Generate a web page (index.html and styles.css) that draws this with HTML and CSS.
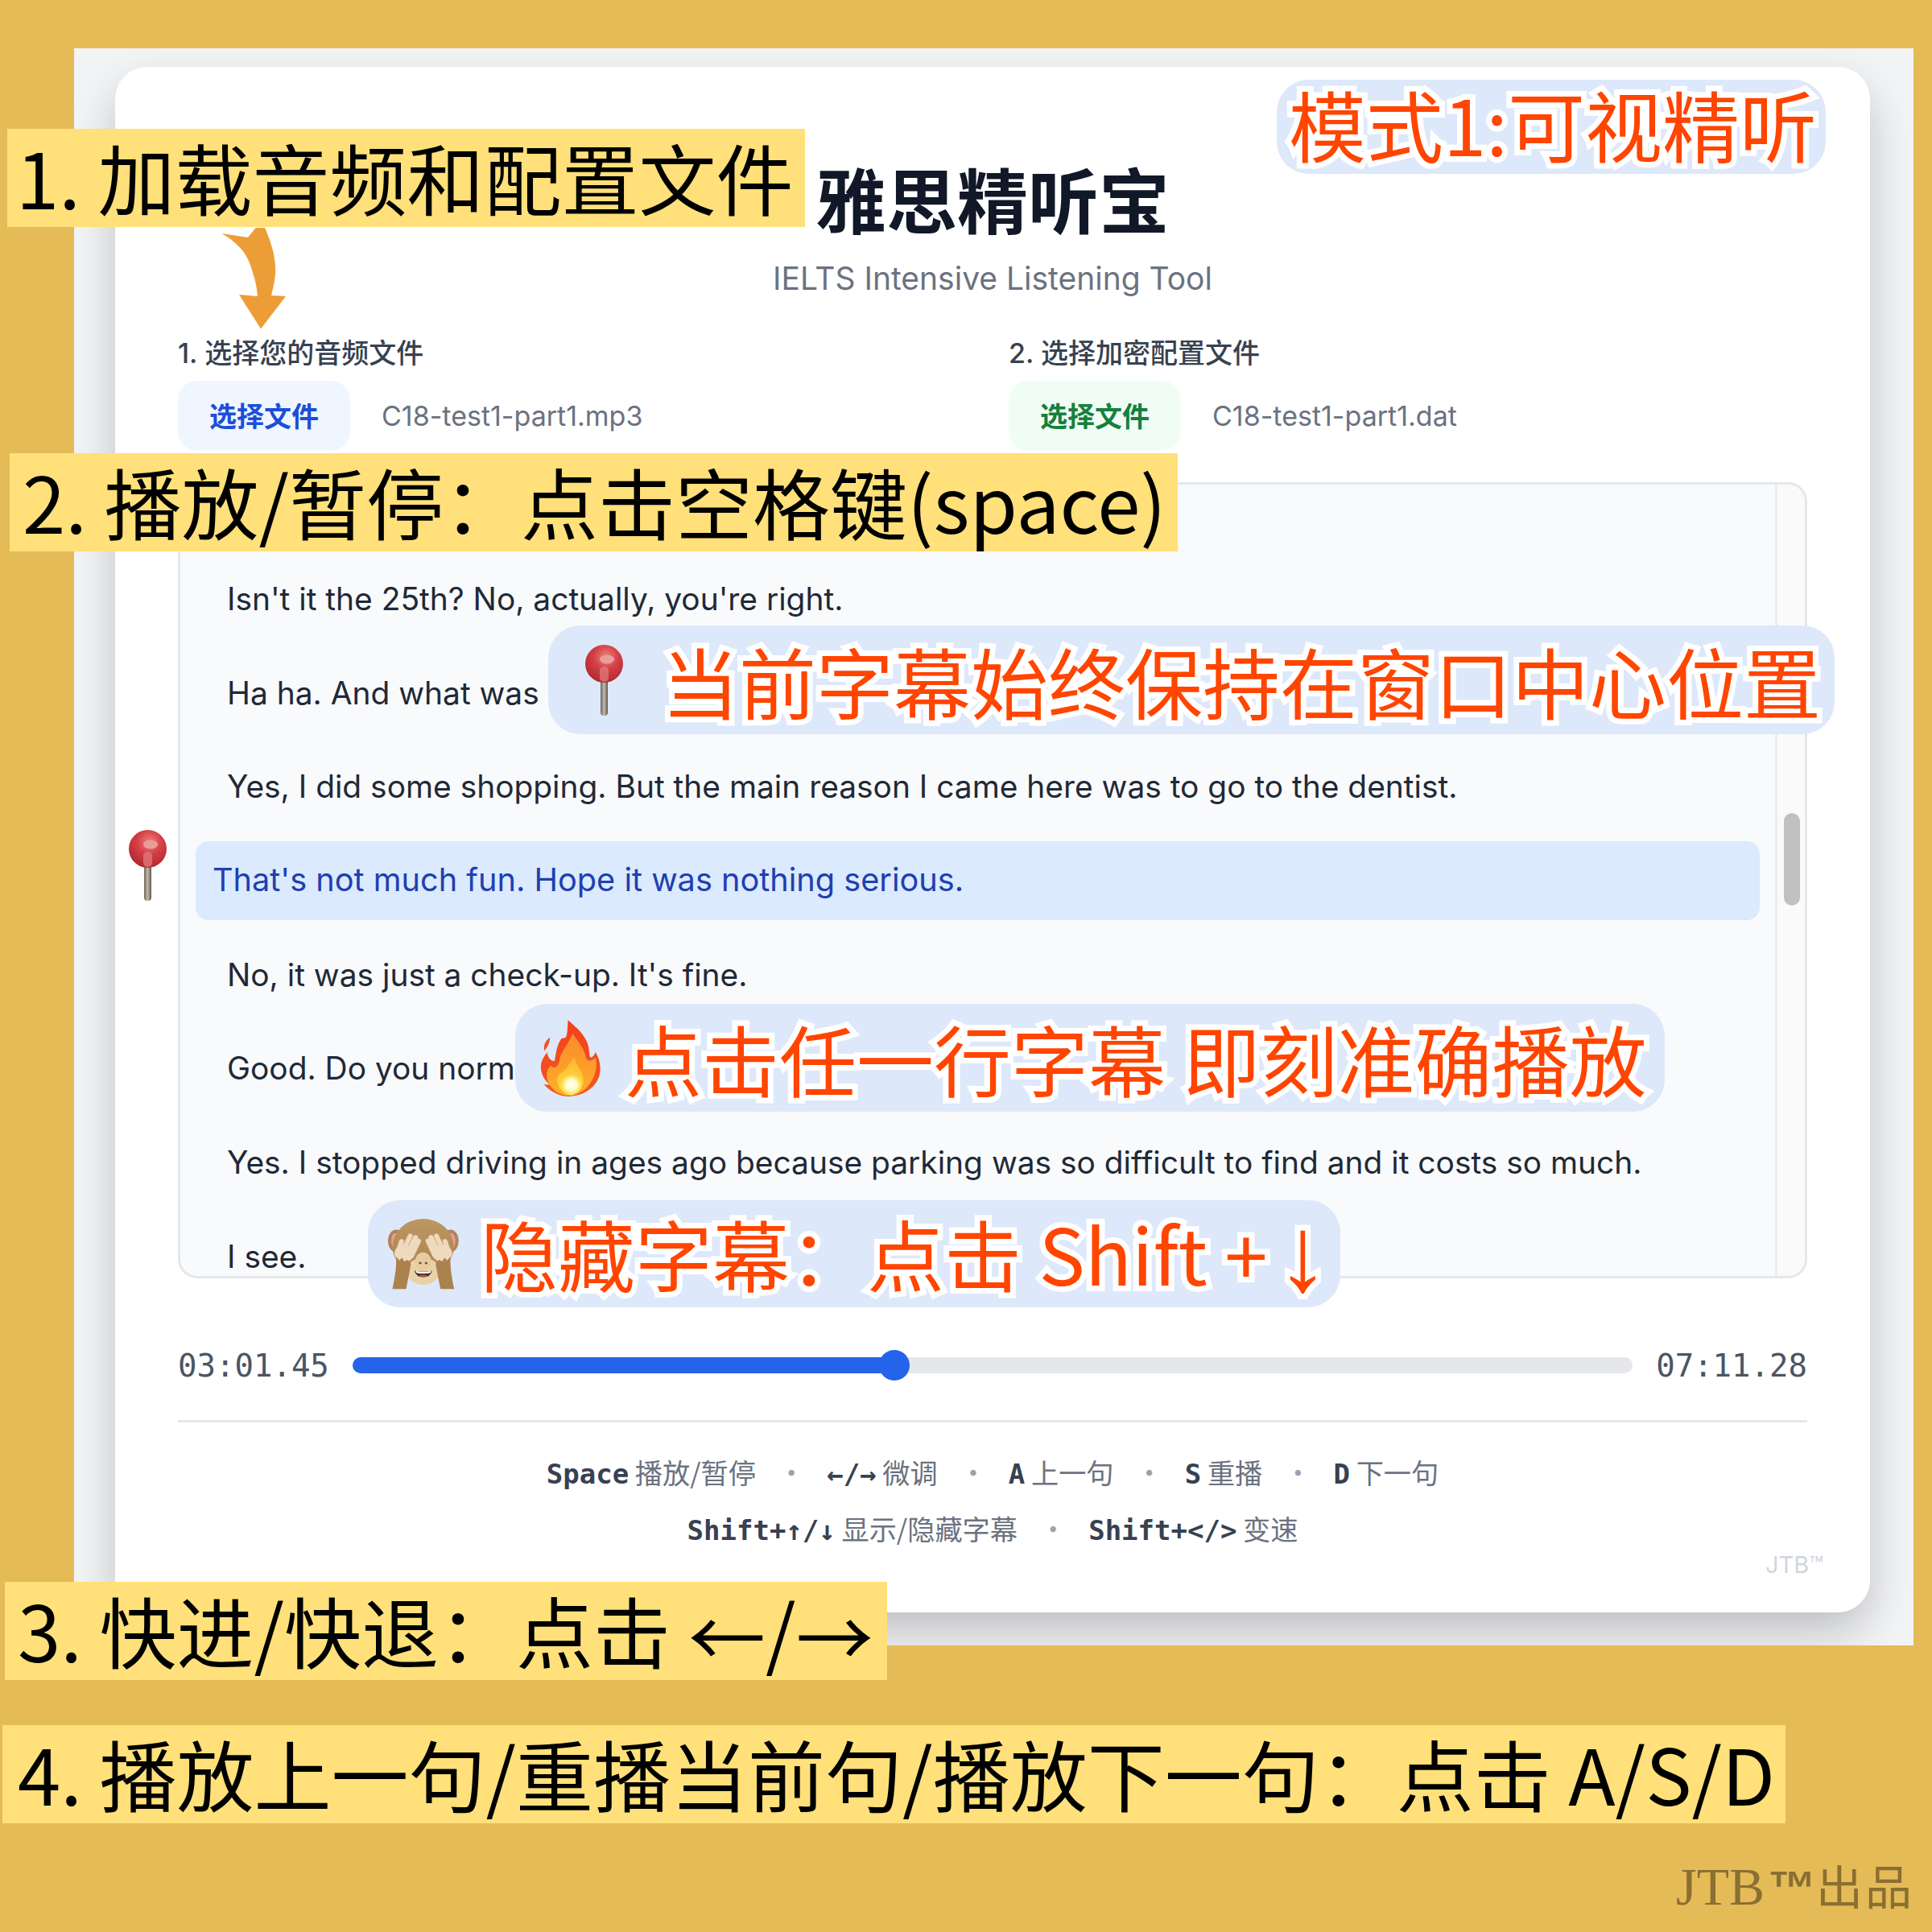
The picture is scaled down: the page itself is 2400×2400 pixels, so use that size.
FILE: index.html
```html
<!DOCTYPE html>
<html>
<head>
    <title>雅思精听宝</title>
    <link rel="stylesheet" href="styles.css">
</head>
<body>
    <svg class="defs" width="0" height="0">
        <defs>
            <radialGradient id="ballGrad" cx="55%" cy="32%" r="72%">
                <stop offset="0" stop-color="#ea8480"/>
                <stop offset="0.45" stop-color="#d43f45"/>
                <stop offset="1" stop-color="#ad262d"/>
            </radialGradient>
            <linearGradient id="needleGrad" x1="0" x2="1" y1="0" y2="0">
                <stop offset="0" stop-color="#6f6558"/>
                <stop offset="0.5" stop-color="#c4b8ab"/>
                <stop offset="1" stop-color="#5f564b"/>
            </linearGradient>
            <linearGradient id="fireOuter" x1="0" x2="0" y1="0" y2="1">
                <stop offset="0" stop-color="#f4401c"/>
                <stop offset="1" stop-color="#f2581f"/>
            </linearGradient>
            <linearGradient id="fireMid" x1="0" x2="0" y1="0" y2="1">
                <stop offset="0" stop-color="#fb8a2c"/>
                <stop offset="0.6" stop-color="#fda02a"/>
                <stop offset="1" stop-color="#ffb02a"/>
            </linearGradient>
            <linearGradient id="fireCore" x1="0" x2="0" y1="0" y2="1">
                <stop offset="0" stop-color="#ffb52e"/>
                <stop offset="1" stop-color="#ffe03c"/>
            </linearGradient>
            <radialGradient id="fireGlow">
                <stop offset="0" stop-color="#fffef0"/>
                <stop offset="0.5" stop-color="#fffbc8"/>
                <stop offset="1" stop-color="#fff07a" stop-opacity="0"/>
            </radialGradient>
            <linearGradient id="furGrad" x1="0" x2="0" y1="0" y2="1">
                <stop offset="0" stop-color="#bd9662"/>
                <stop offset="1" stop-color="#a98250"/>
            </linearGradient>
            <symbol id="pin" viewBox="0 0 47 88">
                <rect x="19" y="40" width="9" height="48" rx="4" fill="url(#needleGrad)"/>
                <circle cx="23.5" cy="23.5" r="23.5" fill="url(#ballGrad)"/>
                <ellipse cx="27" cy="18" rx="9" ry="5.5" fill="#eb9d9a"/>
                <rect x="18" y="27" width="11" height="19" rx="5" fill="#e08080" opacity="0.7"/>
            </symbol>
            <g id="monkeyEar">
                <ellipse cx="98" cy="150" rx="30" ry="42" fill="#ae8654"/>
                <ellipse cx="94" cy="150" rx="14" ry="29" fill="#ee9aa0"/>
            </g>
            <g id="monkeyArm">
                <g class="finger-edge">
                    <line x1="106" y1="188" x2="118" y2="152"/>
                    <line x1="122" y1="190" x2="150" y2="132"/>
                    <line x1="140" y1="195" x2="170" y2="137"/>
                    <line x1="155" y1="205" x2="181" y2="150"/>
                </g>
                <g class="finger-skin">
                    <line x1="106" y1="188" x2="118" y2="152"/>
                    <line x1="122" y1="190" x2="150" y2="132"/>
                    <line x1="140" y1="195" x2="170" y2="137"/>
                    <line x1="155" y1="205" x2="181" y2="150"/>
                </g>
                <ellipse cx="128" cy="196" rx="36" ry="32" fill="#f0dabd"/>
                <path d="M98 208 L110 222 L120 212 L128 226 L140 220 L153 234 C148 265 140 300 135 328 L84 328 C92 292 100 250 98 208Z" fill="#ab824e"/>
            </g>
        </defs>
    </svg>

    <div class="page">
        <div class="panel">
            <div class="card">
                <h1 class="title">雅思精听宝</h1>
                <p class="subtitle">IELTS Intensive Listening Tool</p>

                <div class="pickers">
                    <div class="picker">
                        <div class="picker-label">1. 选择您的音频文件</div>
                        <div class="picker-row">
                            <span class="file-btn file-btn-blue">选择文件</span>
                            <span class="file-name">C18-test1-part1.mp3</span>
                        </div>
                    </div>
                    <div class="picker">
                        <div class="picker-label">2. 选择加密配置文件</div>
                        <div class="picker-row">
                            <span class="file-btn file-btn-green">选择文件</span>
                            <span class="file-name">C18-test1-part1.dat</span>
                        </div>
                    </div>
                </div>

                <div class="transcript">
                    <div class="lines">
                        <div class="line">Isn't it the 25th? No, actually, you're right.</div>
                        <div class="line">Ha ha. And what was</div>
                        <div class="line">Yes, I did some shopping. But the main reason I came here was to go to the dentist.</div>
                        <div class="line line-active">That's not much fun. Hope it was nothing serious.</div>
                        <div class="line">No, it was just a check-up. It's fine.</div>
                        <div class="line">Good. Do you norm</div>
                        <div class="line">Yes. I stopped driving in ages ago because parking was so difficult to find and it costs so much.</div>
                        <div class="line">I see.</div>
                    </div>
                    <div class="scrollbar"><div class="scroll-thumb"></div></div>
                </div>

                <div class="player">
                    <span class="time">03:01.45</span>
                    <div class="track">
                        <div class="track-fill" style="width: 42.3%"><span class="track-thumb"></span></div>
                    </div>
                    <span class="time">07:11.28</span>
                </div>

                <div class="shortcuts">
                    <div class="shortcut-row">
                        <span><b>Space</b> 播放/暂停</span><i>·</i>
                        <span><b>←/→</b> 微调</span><i>·</i>
                        <span><b>A</b> 上一句</span><i>·</i>
                        <span><b>S</b> 重播</span><i>·</i>
                        <span><b>D</b> 下一句</span>
                    </div>
                    <div class="shortcut-row">
                        <span><b>Shift+↑/↓</b> 显示/隐藏字幕</span><i>·</i>
                        <span><b>Shift+&lt;/&gt;</b> 变速</span>
                    </div>
                </div>
                <div class="brand">JTB™</div>
            </div>
        </div>

        <!-- annotations on top of the screenshot -->
        <div class="note note-1">1. 加载音频和配置文件</div>
        <div class="note note-2">2. 播放/暂停：点击空格键(space)</div>
        <div class="note note-3">3. 快进/快退：点击<span class="glyph-left">←</span>/<span class="glyph-right">→</span></div>
        <div class="note note-4">4. 播放上一句/重播当前句/播放下一句：点击 A/S/D</div>

        <svg class="arrow" viewBox="0 0 81 126">
            <path d="M0.5 7 L33 12 L42.6 0 L54 0 C60 14 66 30 67 47 C68 60 65 72 62 84 L80 85 L49 125.5 L22 83 L45 85 C44 74 42 64 39 56 C36 44 31 33 23.5 25 C16 17 8 11 0.5 7Z" fill="#ed9d38"/>
        </svg>

        <div class="pill pill-mode"><span class="hot">模式1:可视精听</span></div>

        <div class="pill pill-center">
            <svg class="pin-icon"><use href="#pin"/></svg>
            <span class="hot">当前字幕始终保持在窗口中心位置</span>
        </div>

        <div class="pill pill-click">
            <svg class="fire-icon" viewBox="35 30 223 285">
                <path d="M138 30 C150 45 185 65 205 105 C220 130 215 165 222 170 C232 170 238 155 240 150 C255 175 258 195 258 215 C258 250 235 285 190 305 C170 312 150 315 135 315 C100 312 70 295 48 270 L70 272 C50 255 35 230 37 200 C38 180 50 165 60 150 C62 170 75 185 88 183 C92 160 95 125 113 100 L130 95 C138 75 135 50 138 30Z" fill="url(#fireOuter)"/>
                <path d="M155 80 C175 110 198 135 205 170 C210 190 230 180 240 170 C250 200 240 250 205 285 C185 305 150 312 130 312 C95 305 70 285 60 250 C55 225 65 205 75 200 C85 215 100 205 105 185 C108 150 135 130 155 80Z" fill="url(#fireMid)"/>
                <path d="M160 165 C165 195 190 215 195 250 C198 275 180 300 150 312 C120 305 95 280 98 250 C102 225 125 225 135 205 C145 190 155 185 160 165Z" fill="url(#fireCore)"/>
                <circle cx="150" cy="272" r="42" fill="url(#fireGlow)"/>
                <path d="M70 95 C72 110 62 130 50 145 C45 130 50 110 70 95Z" fill="#f4511e"/>
            </svg>
            <span class="hot">点击任一行字幕 即刻准确播放</span>
        </div>

        <div class="pill pill-hide">
            <svg class="monkey-icon" viewBox="68 68 262 262">
                <use href="#monkeyEar"/>
                <use href="#monkeyEar" transform="translate(397 0) scale(-1 1)"/>
                <ellipse cx="198" cy="172" rx="113" ry="104" fill="url(#furGrad)"/>
                <ellipse cx="198" cy="262" rx="62" ry="50" fill="#e8d2a8"/>
                <ellipse cx="198" cy="226" rx="30" ry="34" fill="#e6cc9e"/>
                <ellipse cx="187" cy="232" rx="5" ry="4" fill="#6b4a3a"/>
                <ellipse cx="209" cy="232" rx="5" ry="4" fill="#6b4a3a"/>
                <path d="M166 260 Q198 268 231 260 Q225 284 198 284 Q172 284 166 260Z" fill="#4a2a22"/>
                <path d="M170 261 Q198 268 228 261 L225 268 Q198 273 173 268Z" fill="#fff"/>
                <path d="M181 279 Q198 269 216 279 Q198 288 181 279Z" fill="#9c5a55"/>
                <use href="#monkeyArm"/>
                <use href="#monkeyArm" transform="translate(397 0) scale(-1 1)"/>
            </svg>
            <span class="hot">隐藏字幕：点击 Shift +<span class="glyph-down">↓</span></span>
        </div>

        <svg class="side-pin"><use href="#pin"/></svg>

        <div class="credit"><span class="credit-en">JTB</span><span class="credit-tm">™</span><span class="credit-cn">出品</span></div>
    </div>
</body>
</html>
```

FILE: styles.css
```css
* {
    box-sizing: border-box;
}

body {
    margin: 0;
    background-color: #e4bb56;
    font-family: Inter, "Noto Sans CJK SC", sans-serif;
}

.defs {
    position: absolute;
}

.page {
    position: relative;
    width: 2400px;
    height: 2400px;
    padding: 60px 23px 0 92px;
}

.panel {
    height: 1984px;
    padding: 23px 54px 41px 51px;
    background-color: #f3f4f6;
    overflow: hidden;
}

.card {
    position: relative;
    height: 1920px;
    padding: 110px 78px 0;
    background-color: #fff;
    border-radius: 40px;
    box-shadow: 0 25px 60px -4px rgba(0, 0, 0, 0.24);
}

.title {
    margin: 0;
    font-size: 88px;
    line-height: 104px;
    font-weight: 700;
    text-align: center;
    color: #111827;
    font-family: "Noto Sans CJK SC", sans-serif;
}

.subtitle {
    margin: 24px 0 0;
    font-size: 39px;
    line-height: 50px;
    text-align: center;
    color: #6b7280;
}

.pickers {
    display: grid;
    grid-template-columns: 1fr 1fr;
    gap: 40px;
    margin-top: 45px;
}

.picker-label {
    font-size: 34px;
    line-height: 46px;
    font-weight: 500;
    color: #374151;
    margin-bottom: 11px;
}

.picker-row {
    display: flex;
    align-items: center;
    gap: 39px;
}

.file-btn {
    display: flex;
    align-items: center;
    justify-content: center;
    width: 214px;
    height: 87px;
    padding-bottom: 2px;
    border-radius: 24px;
    font-size: 34px;
    font-weight: 700;
}

.file-btn-blue {
    background-color: #eff6ff;
    color: #1d4ed8;
}

.file-btn-green {
    background-color: #f0fdf4;
    color: #15803d;
}

.file-name {
    font-size: 34px;
    color: #6b7280;
}

.transcript {
    display: flex;
    height: 989px;
    margin-top: 39px;
    background-color: #f9fafb;
    border: 3px solid #e5e7eb;
    border-radius: 24px;
    overflow: hidden;
}

.lines {
    flex: 1;
    display: flex;
    flex-direction: column;
    gap: 18.7px;
    padding: 93px 19px 0;
}

.line {
    flex: none;
    height: 98px;
    padding: 0 39px 1px;
    display: flex;
    align-items: center;
    font-size: 38.9px;
    color: #1f2937;
    border-radius: 16px;
}

.line-active {
    padding: 0 21px 2px;
    font-size: 39.7px;
    background-color: #dbeafe;
    color: #1e40af;
}

.scrollbar {
    flex: none;
    width: 37px;
    padding: 408px 6px 0 8px;
    background-color: #fafafa;
    border-left: 3px solid #ececec;
}

.scroll-thumb {
    height: 115px;
    background-color: #c1c1c1;
    border-radius: 10px;
}

.player {
    display: flex;
    align-items: center;
    gap: 29px;
    height: 40px;
    margin-top: 88px;
}

.time {
    font-family: "DejaVu Sans Mono", monospace;
    font-size: 39px;
    color: #4b5563;
}

.track {
    flex: 1;
    height: 20px;
    background-color: #e5e7eb;
    border-radius: 10px;
}

.track-fill {
    position: relative;
    height: 100%;
    background-color: #2563eb;
    border-radius: 10px;
}

.track-thumb {
    position: absolute;
    right: -19px;
    top: -9px;
    width: 38px;
    height: 38px;
    background-color: #2563eb;
    border-radius: 50%;
}

.shortcuts {
    margin-top: 48px;
    padding-top: 26px;
    border-top: 3px solid #e5e7eb;
}

.shortcut-row {
    display: flex;
    justify-content: center;
    gap: 27px;
    height: 70px;
    line-height: 70px;
    font-size: 34.2px;
    color: #6b7280;
    font-family: "Noto Sans CJK SC", sans-serif;
}

.shortcut-row b {
    font-family: "DejaVu Sans Mono", monospace;
    font-size: 34px;
    color: #374151;
}

.shortcut-row i {
    font-style: normal;
    color: #9ca3af;
}

.brand {
    position: absolute;
    right: 58px;
    bottom: 42px;
    font-size: 29px;
    color: #d1d5db;
}

/* annotations */
.note {
    position: absolute;
    display: flex;
    align-items: center;
    height: 122px;
    padding-bottom: 5px;
    background-color: #ffe07a;
    color: #000;
    font-family: "Noto Sans CJK SC", sans-serif;
    font-size: 96px;
    white-space: pre;
}

.note-1 {
    left: 9px;
    top: 160px;
    width: 991px;
    padding-left: 11px;
}

.note-2 {
    left: 12px;
    top: 563px;
    width: 1451px;
    padding-left: 16px;
}

.note-3 {
    left: 6px;
    top: 1965px;
    width: 1096px;
    padding-left: 16px;
}

.note-4 {
    left: 3px;
    top: 2143px;
    width: 2215px;
    padding-left: 19px;
}

.glyph-left {
    margin: 12px 0 0 22px;
}

.glyph-right {
    margin-top: 12px;
}

.glyph-down {
    font-family: "Liberation Sans", sans-serif;
    font-size: 132px;
    margin-left: 11px;
    vertical-align: -6px;
}

.arrow {
    position: absolute;
    left: 275px;
    top: 283px;
    width: 81px;
    height: 126px;
}

.pill {
    position: absolute;
    display: flex;
    align-items: center;
    background-color: #dde8fa;
    border-radius: 40px;
    white-space: nowrap;
}

.pill svg {
    flex: none;
}

.hot {
    font-family: "Noto Sans CJK SC", sans-serif;
    font-size: 96px;
    line-height: 1;
    color: #ff4500;
    -webkit-text-stroke: 14px #fff;
    paint-order: stroke fill;
}

.pill-mode {
    left: 1586px;
    top: 99px;
    width: 682px;
    height: 117px;
    padding-left: 15px;
    padding-bottom: 9px;
}

.pill-center {
    left: 681px;
    top: 777px;
    width: 1598px;
    height: 135px;
    padding-left: 46px;
    gap: 48px;
}

.pill-click {
    left: 640px;
    top: 1247px;
    width: 1428px;
    height: 134px;
    padding-left: 31px;
    gap: 30px;
}

.pill-hide {
    left: 457px;
    top: 1491px;
    width: 1208px;
    height: 133px;
    padding-left: 25px;
    gap: 27px;
}

.pin-icon {
    width: 47px;
    height: 88px;
}

.fire-icon {
    width: 75px;
    height: 95px;
}

.monkey-icon {
    width: 88px;
    height: 88px;
}

.finger-edge line {
    stroke: #c49f72;
    stroke-width: 22;
    stroke-linecap: round;
}

.finger-skin line {
    stroke: #f0dabd;
    stroke-width: 17;
    stroke-linecap: round;
}

.side-pin {
    position: absolute;
    left: 160px;
    top: 1031px;
    width: 47px;
    height: 88px;
}

.credit {
    position: absolute;
    left: 2082px;
    top: 2296px;
    color: #8a6f33;
    line-height: 90px;
    white-space: nowrap;
}

.credit-en {
    font-family: "Liberation Serif", serif;
    font-size: 66px;
}

.credit-tm {
    font-family: "Liberation Sans", sans-serif;
    font-size: 60px;
    font-weight: 700;
    margin-left: 4px;
}

.credit-cn {
    font-family: "Noto Sans CJK SC", sans-serif;
    font-size: 58px;
    letter-spacing: 3px;
}
```
